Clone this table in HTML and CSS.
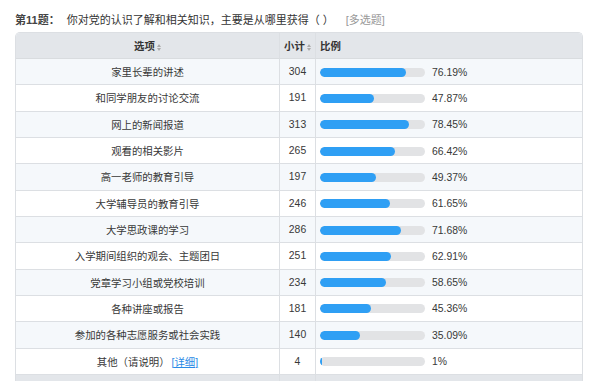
FILE: index.html
```html
<!DOCTYPE html>
<html lang="zh">
<head>
<meta charset="utf-8">
<link rel="stylesheet" href="styles.css">
</head>
<body>
<div class="page">
  <div class="title"><span class="qno">第11题：</span><span class="qtext">你对党的认识了解和相关知识，主要是从哪里获得（ ）</span><span class="qtype">[多选题]</span></div>
  <div class="tablewrap">
    <table class="stats">
      <colgroup><col class="c1"><col class="c2"><col class="c3"></colgroup>
      <thead>
        <tr>
          <th class="opt">选项<svg class="sort" width="4" height="7" viewBox="0 0 4 7"><path d="M2 0L4 3H0Z M2 7L0 4H4Z" fill="#aaa"/></svg></th>
          <th class="cnt">小计<svg class="sort" width="4" height="7" viewBox="0 0 4 7"><path d="M2 0L4 3H0Z M2 7L0 4H4Z" fill="#aaa"/></svg></th>
          <th class="pct">比例</th>
        </tr>
      </thead>
      <tbody>
        <tr><td class="opt">家里长辈的讲述</td><td class="cnt">304</td><td class="pct"><span class="track"><span class="fill" style="width:86px"></span></span><span class="val">76.19%</span></td></tr>
        <tr><td class="opt">和同学朋友的讨论交流</td><td class="cnt">191</td><td class="pct"><span class="track"><span class="fill" style="width:54px"></span></span><span class="val">47.87%</span></td></tr>
        <tr><td class="opt">网上的新闻报道</td><td class="cnt">313</td><td class="pct"><span class="track"><span class="fill" style="width:89px"></span></span><span class="val">78.45%</span></td></tr>
        <tr><td class="opt">观看的相关影片</td><td class="cnt">265</td><td class="pct"><span class="track"><span class="fill" style="width:75px"></span></span><span class="val">66.42%</span></td></tr>
        <tr><td class="opt">高一老师的教育引导</td><td class="cnt">197</td><td class="pct"><span class="track"><span class="fill" style="width:56px"></span></span><span class="val">49.37%</span></td></tr>
        <tr><td class="opt">大学辅导员的教育引导</td><td class="cnt">246</td><td class="pct"><span class="track"><span class="fill" style="width:70px"></span></span><span class="val">61.65%</span></td></tr>
        <tr><td class="opt">大学思政课的学习</td><td class="cnt">286</td><td class="pct"><span class="track"><span class="fill" style="width:81px"></span></span><span class="val">71.68%</span></td></tr>
        <tr><td class="opt">入学期间组织的观会、主题团日</td><td class="cnt">251</td><td class="pct"><span class="track"><span class="fill" style="width:71px"></span></span><span class="val">62.91%</span></td></tr>
        <tr><td class="opt">党章学习小组或党校培训</td><td class="cnt">234</td><td class="pct"><span class="track"><span class="fill" style="width:66px"></span></span><span class="val">58.65%</span></td></tr>
        <tr><td class="opt">各种讲座或报告</td><td class="cnt">181</td><td class="pct"><span class="track"><span class="fill" style="width:51px"></span></span><span class="val">45.36%</span></td></tr>
        <tr><td class="opt">参加的各种志愿服务或社会实践</td><td class="cnt">140</td><td class="pct"><span class="track"><span class="fill" style="width:40px"></span></span><span class="val">35.09%</span></td></tr>
        <tr><td class="opt">其他（请说明）<a class="detail" href="#">[详细]</a></td><td class="cnt">4</td><td class="pct"><span class="track"><span class="fill" style="width:2px"></span></span><span class="val">1%</span></td></tr>
      </tbody>
      <tfoot>
        <tr><td class="opt"></td><td class="cnt"></td><td class="pct"></td></tr>
      </tfoot>
    </table>
  </div>
</div>
</body>
</html>
```
FILE: styles.css
```css
html, body {
  margin: 0;
  padding: 0;
  background: #ffffff;
}
body {
  font-family: "Liberation Sans", "Noto Sans CJK SC", sans-serif;
  font-size: 10.4px;
  color: #383838;
}
.page {
  padding: 12px 17px 0 15px;
}
.title {
  height: 20px;
  line-height: 16px;
  font-size: 11px;
  color: #333;
  white-space: nowrap;
}
.qno {
  font-weight: bold;
  color: #444;
  margin-right: 7px;
}
.qtype {
  color: #999;
  margin-left: 12px;
}
.tablewrap {
  border: 1px solid #dcdfe3;
  border-bottom: none;
  border-radius: 5px 5px 0 0;
  overflow: hidden;
  width: 566px;
}
.stats {
  width: 100%;
  border-collapse: separate;
  border-spacing: 0;
  table-layout: fixed;
}
.c1 { width: 264px; }
.c2 { width: 36px; }
.stats th {
  background: #e3e6ea;
  height: 26px;
  font-weight: bold;
  color: #333;
  border-bottom: 1px solid #d9dcdf;
  padding: 0;
  box-sizing: border-box;
}
.stats th.opt, .stats td.opt { border-right: 1px solid #dcdfe3; }
.stats th.cnt, .stats td.cnt { border-right: 1px solid #dcdfe3; }
.stats th.opt, .stats th.cnt { text-align: center; }
.stats th.pct { text-align: left; padding-left: 4px; }
.sort {
  margin-left: 2px;
  vertical-align: -1px;
}
.stats td {
  height: 26.33px;
  padding: 0;
  box-sizing: border-box;
  border-bottom: 1px solid #dcdfe3;
  vertical-align: middle;
}
.stats tbody tr:nth-child(odd) td { background: #f5f8fb; }
.stats tbody tr:nth-child(even) td { background: #ffffff; }
.stats td.opt, .stats td.cnt { text-align: center; }
.stats td.pct { padding-left: 4px; white-space: nowrap; }
.track {
  display: inline-block;
  vertical-align: middle;
  width: 105px;
  height: 9px;
  border-radius: 5px;
  background: #e2e3e5;
  overflow: hidden;
}
.fill {
  display: block;
  height: 100%;
  background: #2f9ff4;
  border-radius: 5px;
}
.val {
  display: inline-block;
  vertical-align: middle;
  margin-left: 7px;
}
.detail {
  color: #2a8ae6;
  text-decoration: underline;
  margin-left: 2px;
}
.stats tfoot td {
  background: #e3e6ea;
  height: 26px;
  border-bottom: none;
}
```
